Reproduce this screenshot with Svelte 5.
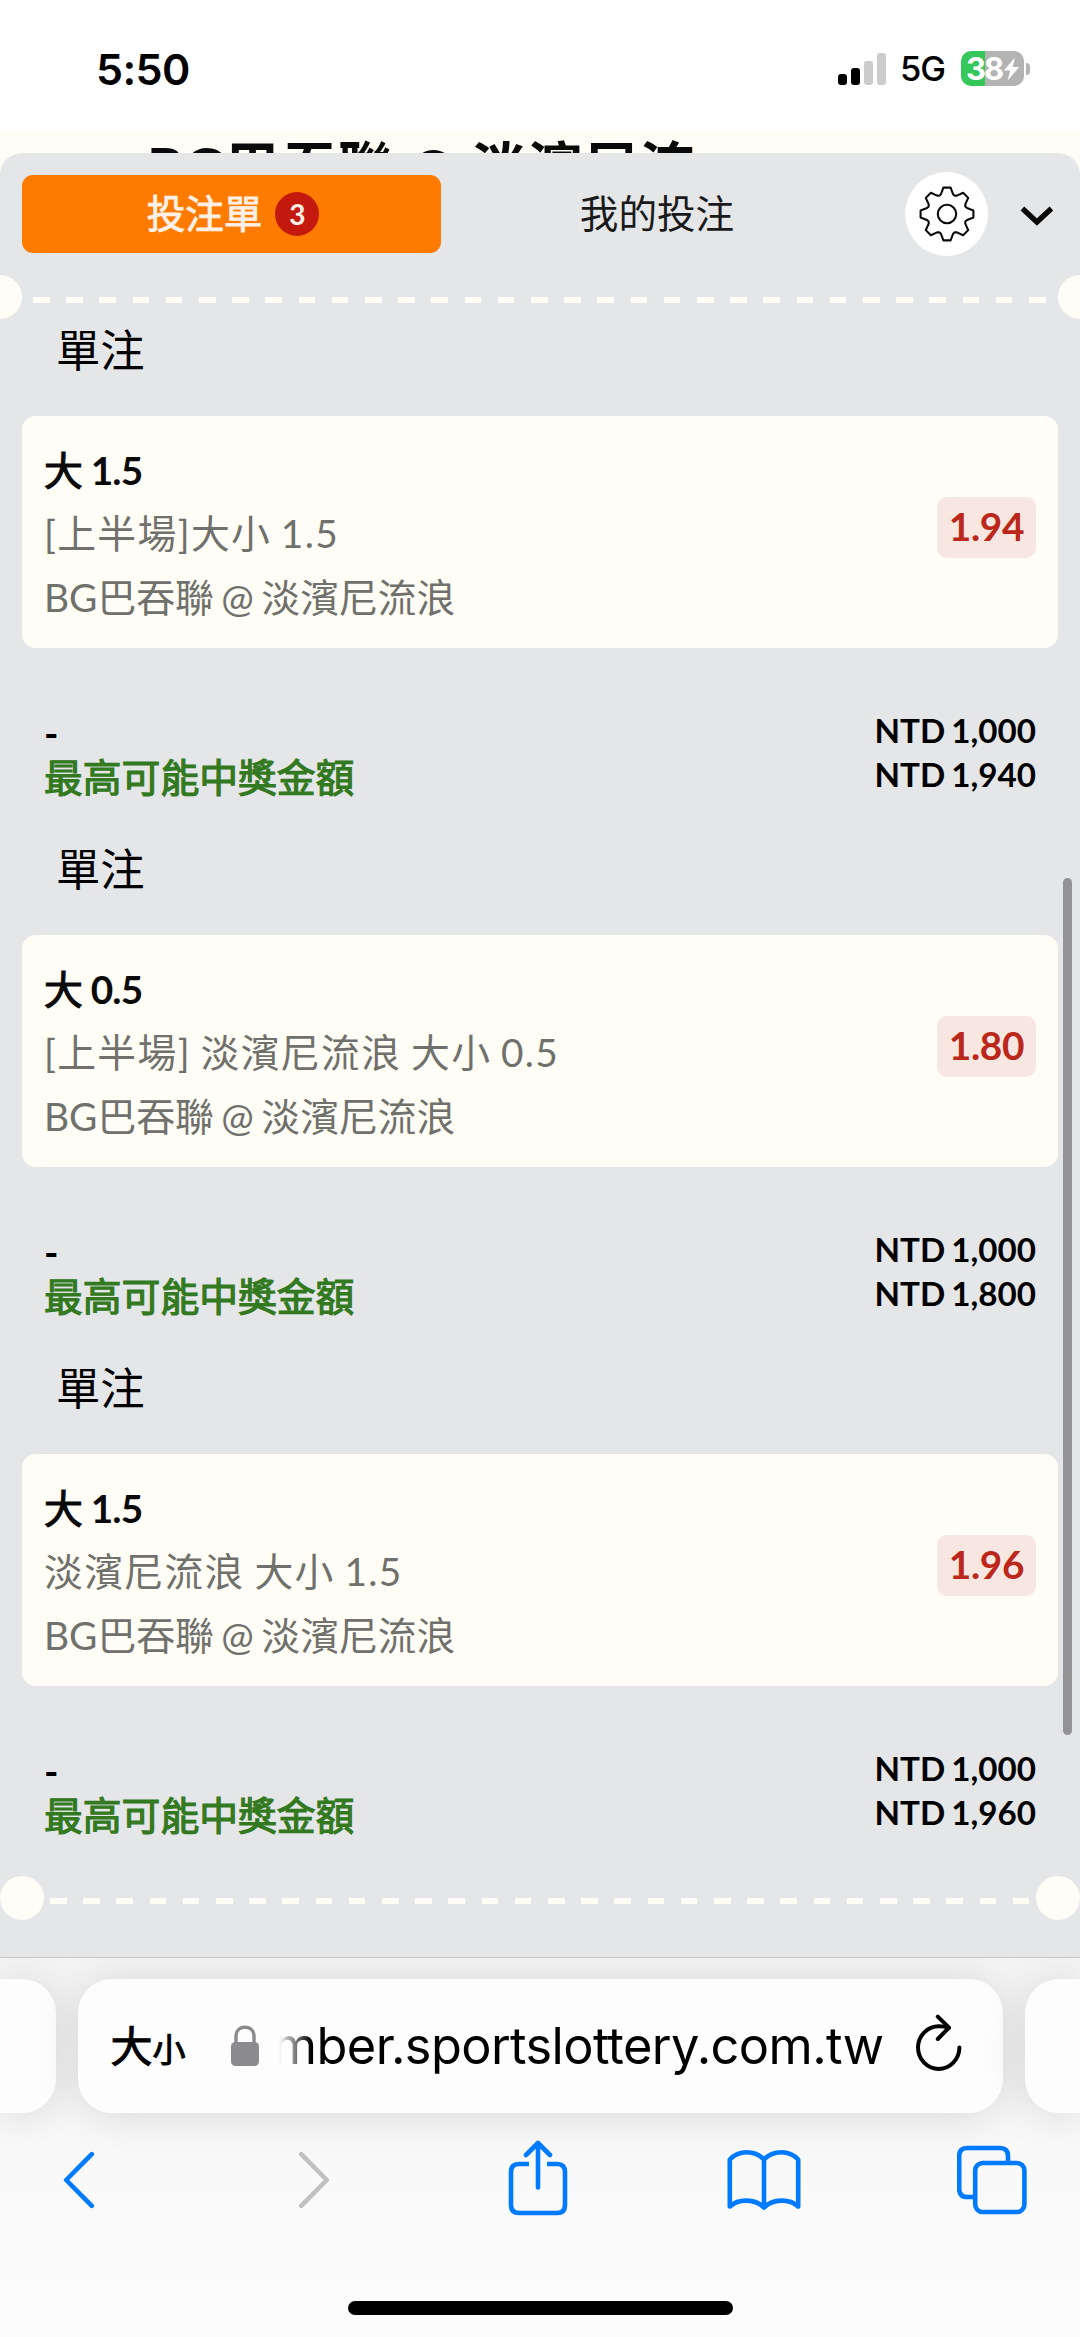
<script lang="ts">
	type Bet = {
		side: string;
		line: string;
		market: string;
		match: string;
		odds: string;
		stake: string;
		payout: string;
	};

	const match = 'BG巴吞聯 @ 淡濱尼流浪';

	const bets: Bet[] = [
		{
			side: '大',
			line: '1.5',
			market: '[上半場]大小 1.5',
			match,
			odds: '1.94',
			stake: 'NTD 1,000',
			payout: 'NTD 1,940'
		},
		{
			side: '大',
			line: '0.5',
			market: '[上半場] 淡濱尼流浪 大小 0.5',
			match,
			odds: '1.80',
			stake: 'NTD 1,000',
			payout: 'NTD 1,800'
		},
		{
			side: '大',
			line: '1.5',
			market: '淡濱尼流浪 大小 1.5',
			match,
			odds: '1.96',
			stake: 'NTD 1,000',
			payout: 'NTD 1,960'
		}
	];

	const signal = [
		{ height: 11, on: true },
		{ height: 17, on: true },
		{ height: 24, on: false },
		{ height: 32, on: false }
	];

	// Outline of one gear tooth, pointing up, around the origin
	const tooth = [
		[-7.2, -18.6],
		[-6, -20],
		[-3.6, -26.4],
		[3.6, -26.4],
		[6, -20],
		[7.2, -18.6]
	];

	const gearPoints = Array.from({ length: 8 }, (_, i) => {
		const a = (i * Math.PI) / 4;
		return tooth
			.map(([x, y]) => {
				const px = x * Math.cos(a) - y * Math.sin(a);
				const py = x * Math.sin(a) + y * Math.cos(a);
				return `${px.toFixed(2)},${py.toFixed(2)}`;
			})
			.join(' ');
	}).join(' ');
</script>

<div class="screen">
	<div class="status">
		<span class="time">5:50</span>
		<div class="status-right">
			<div class="signal">
				{#each signal as bar}
					<i class:on={bar.on} style="height: {bar.height}px"></i>
				{/each}
			</div>
			<span class="network">5G</span>
			<div class="battery">
				<span>38</span>
				<svg width="17" height="24" viewBox="0 0 17 24">
					<path d="M12 0.5 L0.8 13.6 H7.2 L4.6 23.5 L16.2 10 H9.6 Z" fill="#fff" />
				</svg>
			</div>
			<i class="battery-tip"></i>
		</div>
	</div>

	<div class="behind">BG巴吞聯 @ 淡濱尼流</div>

	<div class="sheet-wrap">
		<div class="sheet">
			<header class="tabs">
				<button type="button" class="tab active">
					<span class="semi">投注單</span>
					<span class="count">3</span>
				</button>
				<button type="button" class="tab">我的投注</button>
				<button type="button" class="settings" aria-label="設定">
					<svg width="60" height="60" viewBox="-30 -30 60 60">
						<g fill="none" stroke="#0a0a0a" stroke-width="2.1" stroke-linejoin="round">
							<polygon points={gearPoints} />
							<circle r="9.2" />
						</g>
					</svg>
				</button>
				<button type="button" class="collapse" aria-label="收合">
					<svg width="34" height="22" viewBox="0 0 34 22">
						<path d="M3.4 2.6 L17.9 16 L32.4 2.6" fill="none" stroke="#0a0a0a" stroke-width="5.4" />
					</svg>
				</button>
			</header>

			<div class="cut cut-top">
				<i class="hole"></i>
				<i class="dashes"></i>
				<i class="hole"></i>
			</div>

			{#each bets as bet}
				<section class="bet">
					<h2>單注</h2>
					<div class="card">
						<div class="info">
							<p class="pick"><span class="semi">{bet.side}</span> {bet.line}</p>
							<p class="market">{bet.market}</p>
							<p class="match">{bet.match}</p>
						</div>
						<span class="odds">{bet.odds}</span>
					</div>
					<div class="totals">
						<div class="labels">
							<span>-</span>
							<span class="payout-label semi">最高可能中獎金額</span>
						</div>
						<div class="amounts">
							<span>{bet.stake}</span>
							<span>{bet.payout}</span>
						</div>
					</div>
				</section>
			{/each}

			<div class="cut">
				<i class="hole"></i>
				<i class="dashes"></i>
				<i class="hole"></i>
			</div>

			<i class="scrollbar"></i>
		</div>
	</div>

	<footer class="browser">
		<div class="address-row">
			<div class="side left"></div>
			<div class="address">
				<span class="text-size">大<small>小</small></span>
				<svg class="lock" width="28" height="42" viewBox="0 0 28 42">
					<path d="M5 19 V11.5 C5 5.5 8.6 2.2 14 2.2 S23 5.5 23 11.5 V19" fill="none" stroke="#8b8a8f" stroke-width="3.4" />
					<rect x="0" y="17" width="28" height="24" rx="4.5" fill="#8b8a8f" />
				</svg>
				<span class="url"><span>mber.sportslottery.com.tw</span></span>
				<svg class="reload" width="46" height="58" viewBox="0 0 46 58">
					<g fill="none" stroke="#000" stroke-width="4" stroke-linecap="round" stroke-linejoin="round">
						<path d="M43.4 33.6 A20.7 21.3 0 1 1 22.7 12.3 Q27.5 12.2 32.8 13.8" />
						<path d="M21.8 2.6 L33 13.6 L21.8 25" />
					</g>
				</svg>
			</div>
			<div class="side right"></div>
		</div>

		<nav class="toolbar">
			<svg class="back" width="32" height="58" viewBox="0 0 32 58">
				<path d="M28.8 3.2 L3.2 29 L28.8 54.8" />
			</svg>
			<svg class="forward" width="32" height="58" viewBox="0 0 32 58">
				<path d="M3.2 3.2 L28.8 29 L3.2 54.8" />
			</svg>
			<svg class="share" width="60" height="76" viewBox="0 0 60 76">
				<path d="M21 24 H11 Q3 24 3 32 V65 Q3 73 11 73 H49 Q57 73 57 65 V32 Q57 24 49 24 H39" stroke-linecap="butt" />
				<path d="M30 47.5 V3.5 M18 15 L30 3 L42 15" />
			</svg>
			<svg class="book" width="74" height="62" viewBox="0 0 74 62">
				<path d="M37 10.5 C28 0.8 11.5 0.8 2.8 10.5 V57.5 C11.5 49.5 28 49.5 37 58.5 C46 49.5 62.5 49.5 71.2 57.5 V10.5 C62.5 0.8 46 0.8 37 10.5 V58" />
			</svg>
			<svg class="pages" width="70" height="70" viewBox="0 0 70 70">
				<path d="M16.5 52 H10.2 Q2.2 52 2.2 44 V11 Q2.2 3 10.2 3 H43 Q51 3 51 11 V17" stroke-linecap="butt" />
				<rect x="18.2" y="18" width="49.2" height="49" rx="7.5" />
			</svg>
		</nav>

		<i class="home"></i>
	</footer>
</div>

<style>
	:global(body) {
		margin: 0;
	}

	.screen {
		background: #fff;
		box-sizing: border-box;
		color: #000;
		display: flex;
		flex-direction: column;
		font-family: Lato, 'Noto Sans CJK TC', sans-serif;
		height: 2337px;
		overflow: hidden;
		width: 1080px;
	}

	i,
	svg {
		display: block;
		flex: none;
	}

	button {
		appearance: none;
		background: none;
		border: 0;
		font: inherit;
		padding: 0;
	}

	/* Chinese text between regular and bold */
	.semi {
		-webkit-text-stroke: 1.2px currentColor;
		font-weight: 400;
	}

	.status {
		box-sizing: border-box;
		display: flex;
		flex: none;
		font-family: Inter, sans-serif;
		height: 130px;
		justify-content: space-between;
		padding: 51px 50px 0 96px;
	}

	.time {
		font-size: 43px;
		font-weight: 600;
		height: 35px;
		letter-spacing: -0.6px;
		line-height: 36px;
	}

	.status-right {
		align-items: center;
		display: flex;
		height: 35px;
	}

	.signal {
		align-items: flex-end;
		display: flex;
		gap: 4px;
		height: 33px;
		margin-right: 14px;
		width: 48px;
	}

	.signal i {
		background: #ccc;
		border-radius: 3px;
		width: 9px;
	}

	.signal i.on {
		background: #000;
	}

	.network {
		font-size: 34.5px;
		font-weight: 500;
		letter-spacing: -1px;
		line-height: 37px;
		margin-right: 15px;
		width: 46px;
	}

	.battery {
		align-items: center;
		background: linear-gradient(to right, #35c759 24px, #b3b3b3 24px);
		border-radius: 10px;
		box-sizing: border-box;
		color: #fff;
		display: flex;
		font-size: 31px;
		font-weight: 700;
		height: 35px;
		letter-spacing: -2px;
		line-height: 35px;
		padding-left: 5px;
		width: 63px;
	}

	.battery span {
		width: 37px;
	}

	.battery-tip {
		background: #b3b3b3;
		border-radius: 0 5px 5px 0;
		height: 12px;
		margin-left: 2px;
		width: 4px;
	}

	.behind {
		background: #fffdf5;
		box-sizing: border-box;
		color: #0a0a0a;
		flex: none;
		font-size: 55.4px;
		font-weight: 700;
		height: 23px;
		letter-spacing: 0.9px;
		line-height: 74px;
		overflow: hidden;
		padding-left: 147px;
		white-space: nowrap;
	}

	.sheet-wrap {
		background: #fffdf5;
		flex: none;
		height: 1804px;
	}

	.sheet {
		background: #e4e6e8;
		border-radius: 22px 22px 0 0;
		height: 100%;
		overflow: hidden;
		position: relative;
	}

	.tabs {
		align-items: center;
		box-sizing: border-box;
		display: flex;
		height: 122px;
		padding: 0 27px 0 22px;
	}

	.tab {
		align-items: center;
		border-radius: 11px;
		box-sizing: border-box;
		color: #1a1a1a;
		display: flex;
		font-size: 38.6px;
		height: 78px;
		justify-content: center;
		line-height: 76px;
		padding-bottom: 2px;
		width: 432px;
	}

	.tab.active {
		background: #ff7b00;
		color: #fff0e6;
		gap: 13px;
		padding: 0 0 0 3px;
		width: 419px;
	}

	.tab .semi {
		-webkit-text-stroke-width: 0.9px;
		padding-bottom: 2px;
	}

	.count {
		background: #c4190f;
		border-radius: 50%;
		font-size: 28px;
		font-weight: 700;
		height: 44px;
		line-height: 44px;
		text-align: center;
		width: 44px;
	}

	.settings {
		align-items: center;
		background: #fff;
		border-radius: 50%;
		display: flex;
		height: 84px;
		justify-content: center;
		margin-left: 32px;
		width: 83px;
	}

	.collapse {
		margin: 6px 0 0 auto;
	}

	.cut {
		display: flex;
		gap: 6px;
		height: 44px;
	}

	.cut-top {
		gap: 11px;
		margin: 0 -22px;
	}

	.hole {
		background: #fffdf5;
		border-radius: 50%;
		height: 44px;
		width: 44px;
	}

	.dashes {
		background: repeating-linear-gradient(to right, #fffdf5 0 16.6px, transparent 16.6px 33.2px);
		flex: 1;
		height: 6px;
		margin-top: 22px;
	}

	.bet {
		height: 519px;
	}

	h2 {
		font-size: 44.3px;
		font-weight: 400;
		height: 97px;
		line-height: 62px;
		margin: 0;
		padding-left: 56px;
	}

	.card {
		align-items: center;
		background: #fffdf5;
		border-radius: 14px;
		box-sizing: border-box;
		display: flex;
		height: 232px;
		justify-content: space-between;
		margin: 0 22px;
		padding: 0 22px;
	}

	.info {
		margin-top: 4px;
	}

	p {
		color: #70706c;
		font-size: 38.8px;
		line-height: 64px;
		margin: 0;
		white-space: pre;
		word-spacing: -2.4px;
	}

	.pick {
		color: #0a0a0a;
		font-weight: 700;
		letter-spacing: -0.8px;
		line-height: 62px;
		word-spacing: 0;
	}

	.market {
		letter-spacing: 1.35px;
		word-spacing: -1.6px;
	}

	.odds {
		background: #f8e7e0;
		border-radius: 10px;
		color: #bb271a;
		font-size: 38.8px;
		font-weight: 700;
		height: 61px;
		letter-spacing: -0.3px;
		line-height: 59px;
		margin-bottom: 10px;
		text-align: center;
		width: 99px;
	}

	.totals {
		display: flex;
		font-weight: 700;
		justify-content: space-between;
		padding: 60px 44px 0;
	}

	.labels,
	.amounts {
		display: flex;
		flex-direction: column;
	}

	.labels {
		font-size: 38.8px;
		line-height: 50px;
	}

	.payout-label {
		color: #33791f;
		line-height: 38px;
	}

	.amounts {
		font-size: 33.2px;
		line-height: 44.3px;
		text-align: right;
		word-spacing: -2px;
	}

	.scrollbar {
		background: #939396;
		border-radius: 5px;
		height: 857px;
		position: absolute;
		right: 8px;
		top: 725px;
		width: 9px;
	}

	.browser {
		align-items: center;
		background: linear-gradient(#f4f4f4, #f9f9f9 200px, #fbfbfb);
		border-top: 1px solid #c6c6c8;
		display: flex;
		flex: 1;
		flex-direction: column;
		overflow: hidden;
	}

	.address-row {
		display: flex;
		gap: 22px;
		height: 134px;
		margin-top: 21px;
		width: 1080px;
	}

	.side,
	.address {
		background: #fdfdfd;
		box-shadow: 0 3px 44px rgba(0, 0, 0, 0.13);
	}

	.side {
		flex: 1;
	}

	.side.left {
		border-radius: 0 34px 34px 0;
	}

	.side.right {
		border-radius: 34px 0 0 34px;
	}

	.address {
		align-items: center;
		border-radius: 34px;
		box-sizing: border-box;
		display: flex;
		padding: 0 41px 0 33px;
		width: 925px;
	}

	.text-size {
		-webkit-text-stroke: 1px #000;
		font-family: 'Noto Sans CJK TC', sans-serif;
		font-size: 42px;
		line-height: 60px;
		white-space: nowrap;
		width: 120px;
	}

	.text-size small {
		font-size: 33px;
	}

	.url {
		-webkit-mask-image: linear-gradient(to right, transparent, #000 32px);
		mask-image: linear-gradient(to right, transparent, #000 32px);
		display: flex;
		font-family: Inter, sans-serif;
		font-size: 50.5px;
		height: 80px;
		justify-content: flex-end;
		letter-spacing: -0.6px;
		line-height: 80px;
		margin-left: 20px;
		overflow: hidden;
		white-space: nowrap;
		width: 605px;
	}

	.reload {
		margin: -6px 0 0 auto;
	}

	.toolbar {
		align-items: center;
		box-sizing: border-box;
		display: flex;
		height: 130px;
		padding: 3px 0 0 63px;
		width: 1080px;
	}

	.toolbar svg {
		fill: none;
		stroke: #007aff;
		stroke-linecap: round;
		stroke-linejoin: round;
		stroke-width: 4.6px;
	}

	.toolbar .forward {
		margin-left: 203px;
		stroke: #c0c0c0;
	}

	.share {
		margin: -3px 0 0 178px;
	}

	.book {
		margin-left: 159px;
	}

	.pages {
		margin-left: 156px;
	}

	.home {
		background: #000;
		border-radius: 7px;
		height: 14px;
		margin-top: 58px;
		width: 385px;
	}
</style>
